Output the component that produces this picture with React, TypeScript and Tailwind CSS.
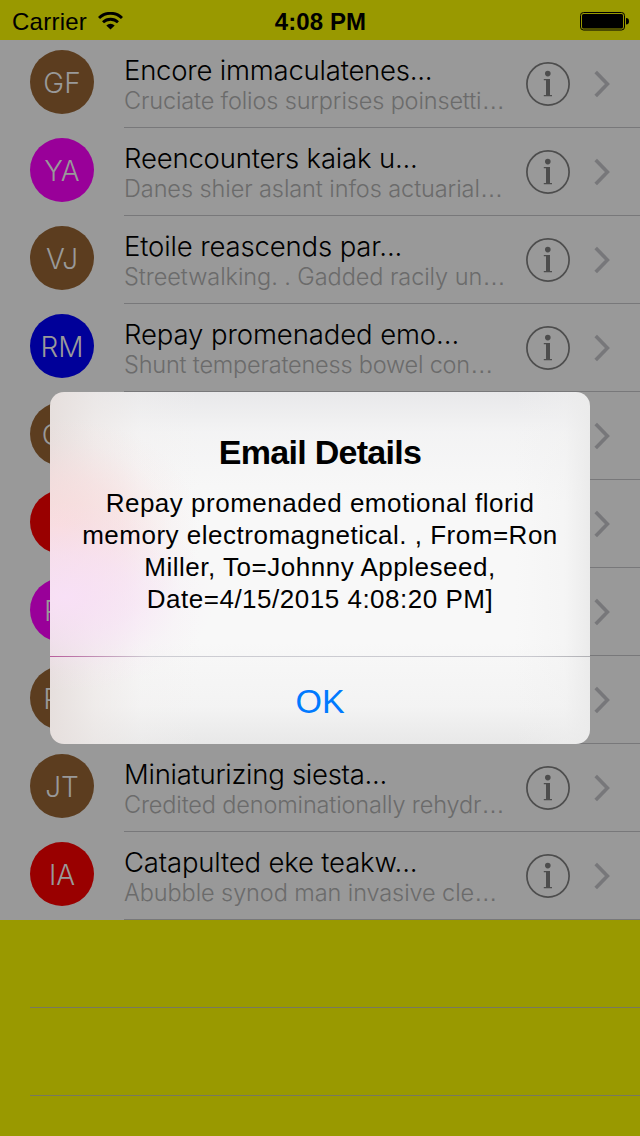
type Mail = { initials: string; color: string; title: string; preview: string; titleTrack: string; previewTrack: string };

const BROWN = "bg-[#5c3d1f]";
const MAGENTA = "bg-[#990099]";
const BLUE = "bg-[#000099]";
const RED = "bg-[#990000]";

const mails: Mail[] = [
  { initials: "GF", color: BROWN, title: "Encore immaculatenes...", preview: "Cruciate folios surprises poinsetti", titleTrack: "tracking-[-0.22px]", previewTrack: "tracking-[-0.15px]" },
  { initials: "YA", color: MAGENTA, title: "Reencounters kaiak u...", preview: "Danes shier aslant infos actuarial", titleTrack: "tracking-[-0.18px]", previewTrack: "tracking-[-0.09px]" },
  { initials: "VJ", color: BROWN, title: "Etoile reascends par...", preview: "Streetwalking. . Gadded racily un", titleTrack: "tracking-[-0.14px]", previewTrack: "tracking-[-0.07px]" },
  { initials: "RM", color: BLUE, title: "Repay promenaded emo...", preview: "Shunt temperateness bowel con", titleTrack: "tracking-[-0.1px]", previewTrack: "tracking-[-0.2px]" },
  { initials: "CD", color: BROWN, title: "", preview: "", titleTrack: "", previewTrack: "" },
  { initials: "", color: RED, title: "", preview: "", titleTrack: "", previewTrack: "" },
  { initials: "RB", color: MAGENTA, title: "", preview: "", titleTrack: "", previewTrack: "" },
  { initials: "PD", color: BROWN, title: "", preview: "", titleTrack: "", previewTrack: "" },
  { initials: "JT", color: BROWN, title: "Miniaturizing siesta...", preview: "Credited denominationally rehydr", titleTrack: "tracking-[-0.27px]", previewTrack: "tracking-[-0.15px]" },
  { initials: "IA", color: RED, title: "Catapulted eke teakw...", preview: "Abubble synod man invasive cle", titleTrack: "tracking-[-0.18px]", previewTrack: "tracking-[-0.09px]" },
];

function StatusBar() {
  return (
    <header className="grid h-10 grid-cols-3 items-center pl-3 pr-[11px] text-[24px] leading-10 text-black">
      <div className="flex items-center gap-[11px] pt-[2px]">
        <span className="tracking-[0.25px]">Carrier</span>
        <svg className="-mt-[3px]" width="25" height="18" viewBox="0 0 25 18">
          <path d="M1 6 A16.5 16.5 0 0 1 24 6" fill="none" stroke="#000" strokeWidth="3" />
          <path d="M5 10.3 A10.8 10.8 0 0 1 20 10.3" fill="none" stroke="#000" strokeWidth="2.8" />
          <path d="M8.3 13.4 A6 6 0 0 1 16.7 13.4 L12.5 17.6 Z" />
        </svg>
      </div>
      <div className="pt-[2px] text-center font-bold tracking-[0.1px]">4:08 PM</div>
      <svg className="justify-self-end" width="49" height="20" viewBox="0 0 49 20">
        <rect x="0.5" y="1.5" width="44" height="17.5" rx="3" fill="none" stroke="#000" />
        <rect x="2" y="3" width="41" height="14.5" rx="1.5" />
        <path d="M46 7 Q49 7 49 10.2 Q49 13.5 46 13.5 Z" />
      </svg>
    </header>
  );
}

function InfoIcon() {
  return (
    <svg width="44" height="44" viewBox="0 0 44 44">
      <circle cx="22" cy="22" r="21.1" fill="none" stroke="#4d4d4d" strokeWidth="1.7" />
      <circle cx="21.8" cy="11.6" r="2.8" fill="#4d4d4d" />
      <path d="M17.8 17 H24 V33 H26 V34.2 H17.8 V33 H20 V18.2 H17.8 Z" fill="#4d4d4d" />
    </svg>
  );
}

function MailRow({ mail }: { mail: Mail }) {
  return (
    <li className="flex h-[88px] pl-[30px]">
      <div className={`mr-[30px] mt-[10px] flex size-16 shrink-0 items-center justify-center rounded-full pt-[2px] font-['Inter'] text-[28px] font-light text-[#999] ${mail.color}`}>
        {mail.initials}
      </div>
      <div className="flex grow border-b border-[#78787a] font-['Inter'] font-light">
        <div className="w-[402px] whitespace-nowrap pt-[12px]">
          <div className="h-[35px] text-[27.5px] leading-[36px] text-black">
            <span className={mail.titleTrack}>{mail.title}</span>
          </div>
          <div className="h-7 text-[23.5px] leading-[28px] text-[#6b6b6b]">
            <span className={mail.previewTrack}>{mail.preview}</span>
            {mail.preview && <span className="font-['Liberation_Sans']">…</span>}
          </div>
        </div>
        <div className="flex h-[88px] items-center gap-6">
          <InfoIcon />
          <svg width="17" height="28" viewBox="0 0 17 28">
            <path d="M1.7 2 L13.4 14 L1.7 26" fill="none" stroke="#77777a" strokeWidth="3.6" />
          </svg>
        </div>
      </div>
    </li>
  );
}

function Alert() {
  return (
    <section
      role="alertdialog"
      className="absolute left-[50px] top-[392px] flex h-[352px] w-[540px] flex-col overflow-hidden rounded-[14px] bg-[#f8f8f8] bg-[radial-gradient(ellipse_150px_95px_at_15px_205px,#f8e0f6,#f8e0f699_45%,#f8e0f622_78%,#f8e0f600),radial-gradient(ellipse_140px_110px_at_10px_135px,#f9dcdd,#f9dcdd99_45%,#f9dcdd22_78%,#f9dcdd00),linear-gradient(to_right,#e6dfdd,#ece6e499_45px,#f3f0ef44_90px,#f8f8f800_150px),linear-gradient(to_left,#ebebeb,#f0f0f066_25px,#f8f8f800_75px),linear-gradient(#e8e8ea,#f0f0f199_40px,#f8f8f800_110px,#f8f8f800_250px,#f0f0f099_315px,#e8e8e8)] text-center text-black"
    >
      <div className="h-[264px] pt-[40px]">
        <h1 className="text-[34px] font-bold leading-[40px] tracking-[-0.7px]">Email Details</h1>
        <p className="pt-[15px] text-[26px] leading-8 tracking-[0.51px]">
          <span className="block">Repay promenaded emotional florid</span>
          <span className="block">memory electromagnetical. , From=Ron</span>
          <span className="block">Miller, To=Johnny Appleseed,</span>
          <span className="block">Date=4/15/2015 4:08:20 PM]</span>
        </p>
      </div>
      <div className="h-px bg-[linear-gradient(to_right,#b85c9c,#cdcdd3_100px,#c9c9cf_480px,#b0b0b4)]" />
      <button className="h-[87px] text-[34px] leading-[88px] text-[#007aff]">OK</button>
    </section>
  );
}

export default function App() {
  return (
    <main className="relative h-[1136px] w-[640px] overflow-hidden bg-[#999900] font-['Liberation_Sans',sans-serif]">
      <StatusBar />
      <ul className="bg-[#999]">
        {mails.map((mail, i) => <MailRow key={i} mail={mail} />)}
      </ul>
      <div className="ml-[30px] h-[88px] border-b border-[#78785f]" />
      <div className="ml-[30px] h-[88px] border-b border-[#78785f]" />
      <Alert />
    </main>
  );
}
